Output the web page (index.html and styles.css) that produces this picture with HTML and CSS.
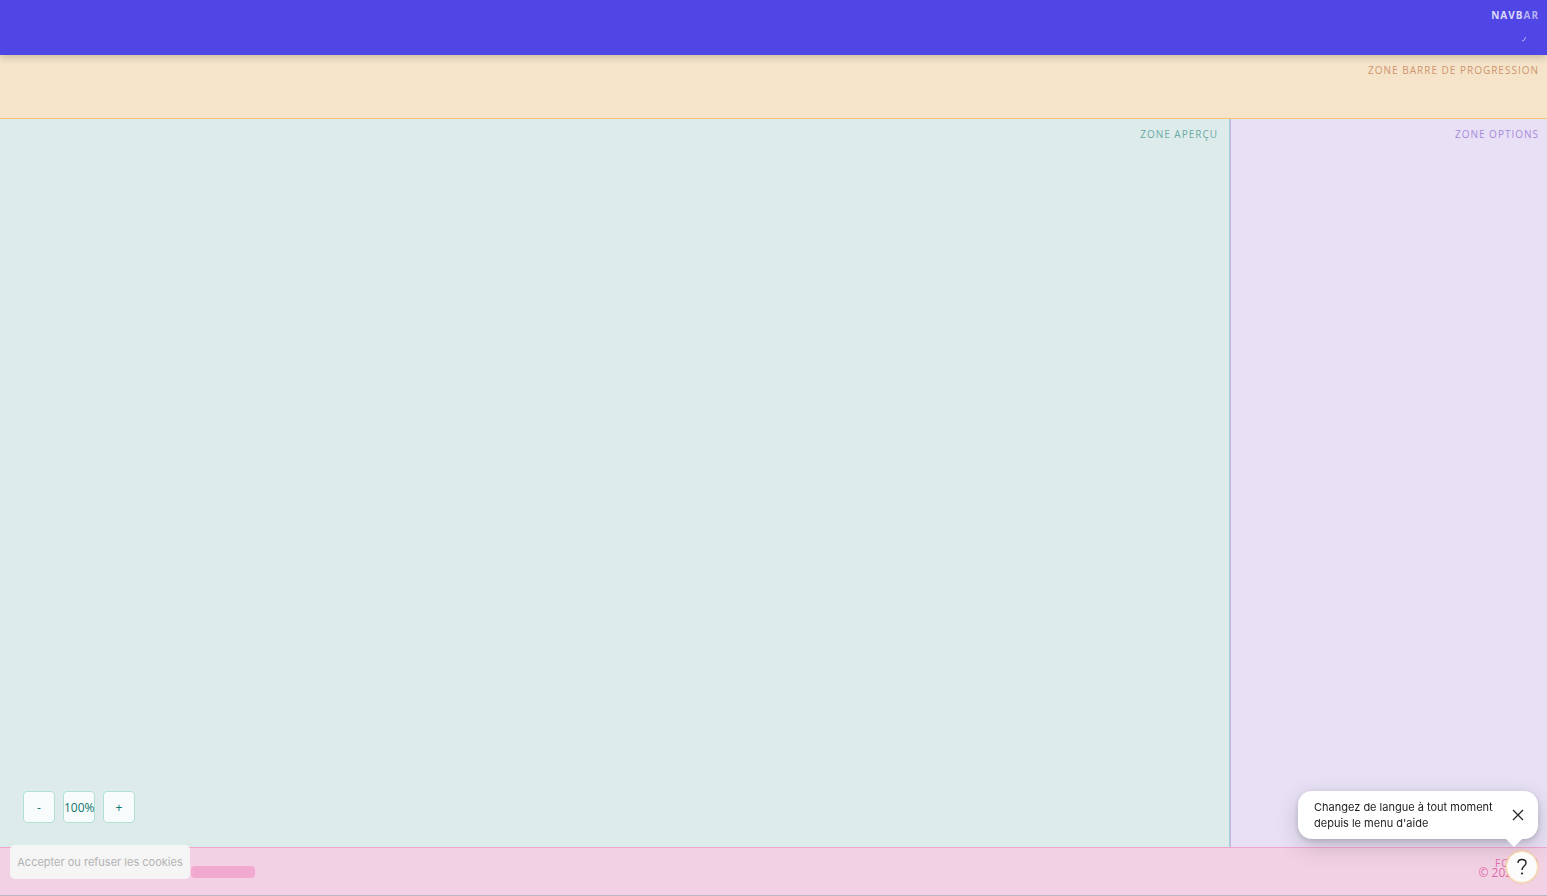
FILE: index.html
```html
<!DOCTYPE html>
<html lang="fr">
<head>
    <meta charset="UTF-8">
    <title>Aperçu</title>
    <link rel="stylesheet" href="styles.css">
</head>
<body>
    <header class="navbar">
        <span class="zone-label"><span class="label-bright">NAVB</span>AR</span>
        <svg class="spinner" width="6" height="6" viewBox="0 0 6 6" aria-hidden="true">
            <path d="M1 5 Q4 5 4.500 1" fill="none" stroke="currentColor"/>
        </svg>
    </header>
    <section class="progress-zone">
        <span class="zone-label">ZONE BARRE DE PROGRESSION</span>
    </section>
    <main class="workspace">
        <section class="preview-zone">
            <span class="zone-label">ZONE APERÇU</span>
            <div class="zoom-controls">
                <button type="button" class="zoom-btn">-</button>
                <button type="button" class="zoom-btn">100%</button>
                <button type="button" class="zoom-btn">+</button>
            </div>
        </section>
        <aside class="options-zone">
            <span class="zone-label">ZONE OPTIONS</span>
        </aside>
    </main>
    <footer class="footer">
        <div class="footer-bar"></div>
        <span class="zone-label">FOOTER</span>
        <span class="copyright">© 2025</span>
    </footer>

    <button type="button" class="cookies">Accepter ou refuser les cookies</button>

    <div class="tooltip" role="status">
        <p class="tooltip-text">Changez de langue à tout moment depuis le menu d'aide</p>
        <button type="button" class="tooltip-close" aria-label="Fermer">
            <svg width="12" height="12" viewBox="0 0 12 12">
                <path d="M1 1 L11 11 M11 1 L1 11" fill="none" stroke="currentColor" stroke-width="1.200"/>
            </svg>
        </button>
    </div>
    <button type="button" class="help" aria-label="Aide">
        <svg width="12" height="18" viewBox="0 0 12 18">
            <path d="M2 5 C2 2.500 3.700 1.500 6 1.500 C8.500 1.500 10 3 10 5 C10 8 6 8 6 12" fill="none" stroke="currentColor" stroke-width="1.400"/>
            <circle cx="6" cy="15.500" r="1.100" fill="currentColor"/>
        </svg>
    </button>
</body>
</html>
```
FILE: styles.css
```css
* {
    box-sizing: border-box;
}
body {
    margin: 0;
    height: 100vh;
    display: flex;
    flex-direction: column;
    overflow: hidden;
    font-family: "Open Sans", "Noto Sans", sans-serif;
}
button {
    padding: 0;
    cursor: pointer;
}
.zone-label {
    position: absolute;
    top: 8px;
    right: 8px;
    font-size: 10px;
    line-height: 14px;
    font-weight: 500;
    letter-spacing: 1px;
    white-space: nowrap;
}

/* Navbar */
.navbar {
    position: relative;
    z-index: 2;
    flex: 0 0 55px;
    background: #4f46e5;
    color: #b5b0f4;
    box-shadow: 0 2px 8px rgba(0, 0, 0, 0.2);
}
.navbar .zone-label {
    font-weight: 700;
}
.label-bright {
    color: #dcdafa;
}
.spinner {
    position: absolute;
    top: 36px;
    right: 20px;
}

/* Zones */
.progress-zone {
    position: relative;
    flex: 0 0 64px;
    background: #f5e4c9;
    border-bottom: 1px solid #f8c471;
    color: #cd9470;
}
.workspace {
    flex: 1;
    display: flex;
}
.preview-zone {
    position: relative;
    flex: 1;
    display: flex;
    align-items: flex-end;
    padding: 24px 23px;
    background: #ddebeb;
    border-right: 1px solid #a2d5cd;
    color: #6baaa5;
}
.preview-zone .zone-label {
    right: 11px;
}
.options-zone {
    position: relative;
    flex: 0 0 317px;
    background: #e8e0f5;
    border-left: 1px solid #c9b3ee;
    color: #a98bdb;
}
.zoom-controls {
    display: flex;
    gap: 8px;
}
.zoom-btn {
    width: 32px;
    height: 32px;
    background: #f7fbfc;
    border: 1px solid #b2dfd8;
    border-radius: 4px;
    color: #0f766e;
    font: 12px "Open Sans", "Noto Sans", sans-serif;
}

/* Footer */
.footer {
    position: relative;
    flex: 0 0 49px;
    padding: 18px 0 0 191px;
    background: #f3d1e5;
    border-top: 1px solid #f1a7cd;
    border-bottom: 1px solid #b8b5c5;
    color: #dc6ba7;
}
.footer-bar {
    width: 64px;
    height: 12px;
    border-radius: 4px;
    background: #f2a9cf;
}
.copyright {
    position: absolute;
    top: 17px;
    right: 28px;
    font-size: 12px;
    line-height: 16px;
}

/* Floating elements */
.cookies {
    position: fixed;
    left: 10px;
    bottom: 17px;
    width: 180px;
    height: 34px;
    background: #f5f5f5;
    border: 0;
    border-radius: 5px;
    color: #b3b3b3;
    font: 11px Inter, sans-serif;
}
.tooltip {
    position: fixed;
    z-index: 3;
    right: 9px;
    bottom: 57px;
    width: 240px;
    display: flex;
    align-items: center;
    justify-content: space-between;
    padding: 8px 14px 8px 16px;
    background: #fff;
    border-radius: 14px;
    box-shadow: 0 8px 24px rgba(0, 0, 0, 0.16), 0 2px 6px rgba(0, 0, 0, 0.16);
}
.tooltip::after {
    content: "";
    position: absolute;
    right: 15px;
    bottom: -8px;
    border: 9px solid transparent;
    border-top-color: #fff;
    border-bottom: 0;
}
.tooltip-text {
    margin: 0;
    width: 186px;
    font: 11px/16px Inter, sans-serif;
    color: #222;
}
.tooltip-close {
    width: 12px;
    height: 12px;
    background: none;
    border: 0;
    color: #222;
}
.tooltip-close svg {
    display: block;
}
.help {
    position: fixed;
    z-index: 4;
    right: 9px;
    bottom: 13px;
    width: 32px;
    height: 32px;
    display: flex;
    align-items: center;
    justify-content: center;
    background: #fcfcfc;
    border: 1px solid #f6dfb5;
    border-radius: 50%;
    box-shadow: 0 0 3px #f0c987;
    color: #222;
}
```
